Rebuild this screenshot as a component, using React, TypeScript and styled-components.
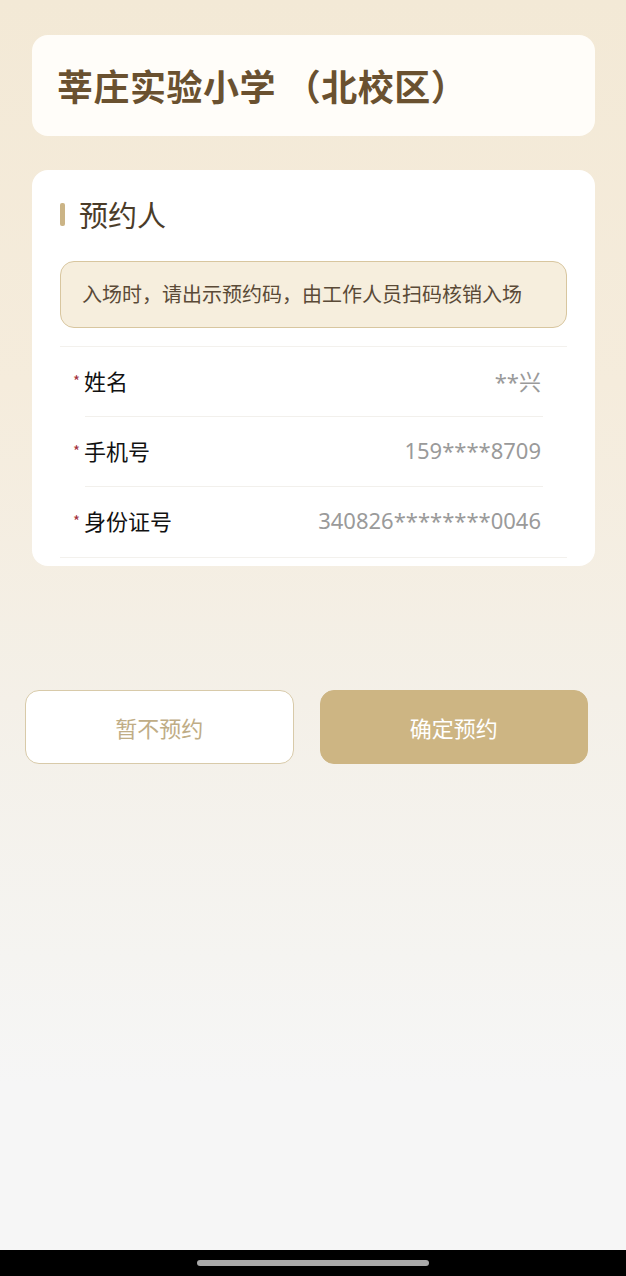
import React from "react";
import styled, { createGlobalStyle } from "styled-components";

const Global = createGlobalStyle`
  html, body { margin: 0; padding: 0; }
  body { font-family: "Noto Sans CJK SC", "Noto Sans", sans-serif; }
  * { box-sizing: border-box; }
`;

const Page = styled.div`
  width: 626px;
  height: 1276px;
  display: flex;
  flex-direction: column;
  background: linear-gradient(180deg, #f3e9d6 0%, #f5ecdc 30%, #f4f0e8 55%, #f5f4f1 75%, #f6f6f6 85%, #f6f6f6 100%);
  overflow: hidden;
`;

const Content = styled.div`
  flex: 1;
  display: flex;
  flex-direction: column;
  padding: 35px 31px 0 32px;
`;

const TitleCard = styled.div`
  height: 101px;
  border-radius: 16px;
  background: #fffdf9;
  display: flex;
  align-items: center;
  padding: 0 0 2px 25px;
`;

const Title = styled.h1`
  margin: 0;
  font-size: 36px;
  font-weight: 700;
  color: #6a5130;
  letter-spacing: 0.5px;
`;

const InfoCard = styled.div`
  margin-top: 34px;
  border-radius: 16px;
  background: #ffffff;
  padding: 28px 28px 8px 28px;
  display: flex;
  flex-direction: column;
`;

const SectionHead = styled.div`
  display: flex;
  align-items: center;
  gap: 14px;
  height: 32px;
`;

const Bar = styled.span`
  width: 5px;
  height: 23px;
  border-radius: 2px;
  background: #cbb486;
`;

const SectionTitle = styled.span`
  font-size: 29px;
  color: #4b3c29;
`;

const Notice = styled.div`
  margin-top: 31px;
  height: 67px;
  border-radius: 14px;
  background: #f6eedd;
  border: 1px solid #d8c69f;
  display: flex;
  align-items: center;
  padding: 0 0 2px 21px;
  font-size: 20px;
  color: #5a4a37;
`;

const Rows = styled.div`
  margin-top: 18px;
  border-top: 1px solid #f3f1ed;
  border-bottom: 1px solid #f3f1ed;
  display: flex;
  flex-direction: column;
`;

const Row = styled.div<{ $last?: boolean }>`
  height: 70px;
  margin: 0 26px 0 13px;
  padding-bottom: 5px;
  display: flex;
  align-items: center;
  justify-content: space-between;
  position: relative;
  &::after {
    content: "";
    display: ${(p) => (p.$last ? "none" : "block")};
    position: absolute;
    left: 12px;
    right: -2px;
    bottom: 0;
    height: 1px;
    background: #f2f0ec;
  }
`;

const Label = styled.span`
  display: flex;
  align-items: center;
  font-size: 22px;
  color: #111;
`;

const Star = styled.span`
  color: #a3303c;
  font-size: 15px;
  margin-right: 4px;
  align-self: flex-start;
  margin-top: 6px;
`;

const Value = styled.span`
  font-size: 22px;
  color: #9a9a9a;
  font-family: "Noto Sans", "Noto Sans CJK SC", sans-serif;
`;

const Buttons = styled.div`
  margin: 124px 7px 0 -7px;
  display: flex;
  gap: 26px;
`;

const Button = styled.button<{ $primary?: boolean }>`
  flex: 1;
  height: 74px;
  border-radius: 14px;
  font-family: "Noto Sans CJK SC", sans-serif;
  font-size: 22px;
  border: 1px solid ${(p) => (p.$primary ? "#cdb583" : "#d8caa9")};
  background: ${(p) => (p.$primary ? "#cdb583" : "#ffffff")};
  color: ${(p) => (p.$primary ? "#ffffff" : "#c0ad86")};
`;

const HomeBar = styled.div`
  height: 26px;
  background: #000;
  display: flex;
  align-items: center;
  justify-content: center;
  flex-shrink: 0;
`;

const Indicator = styled.span`
  width: 232px;
  height: 6px;
  border-radius: 3px;
  background: #a9a9a9;
`;

const rows = [
  { label: "姓名", value: "**兴" },
  { label: "手机号", value: "159****8709" },
  { label: "身份证号", value: "340826********0046" },
];

export default function App() {
  return (
    <Page>
      <Global />
      <Content>
        <TitleCard>
          <Title>莘庄实验小学 （北校区）</Title>
        </TitleCard>
        <InfoCard>
          <SectionHead>
            <Bar />
            <SectionTitle>预约人</SectionTitle>
          </SectionHead>
          <Notice>入场时，请出示预约码，由工作人员扫码核销入场</Notice>
          <Rows>
            {rows.map((r, i) => (
              <Row key={r.label} $last={i === rows.length - 1}>
                <Label>
                  <Star>*</Star>
                  {r.label}
                </Label>
                <Value>{r.value}</Value>
              </Row>
            ))}
          </Rows>
        </InfoCard>
        <Buttons>
          <Button>暂不预约</Button>
          <Button $primary>确定预约</Button>
        </Buttons>
      </Content>
      <HomeBar>
        <Indicator />
      </HomeBar>
    </Page>
  );
}
